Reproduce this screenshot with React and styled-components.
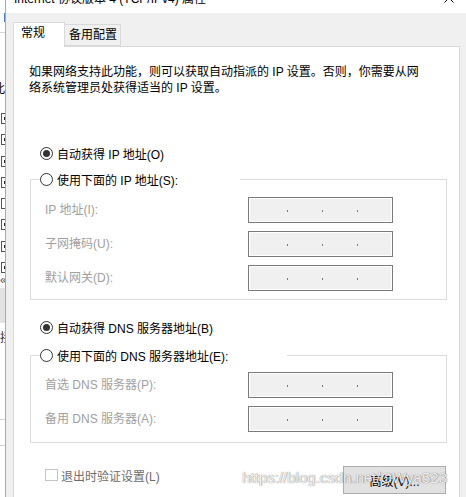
import React from "react";
import styled, { createGlobalStyle } from "styled-components";

const GlobalStyle = createGlobalStyle`
  html, body {
    margin: 0;
    padding: 0;
    background: #fff;
  }
  body {
    font-family: "Liberation Sans", "Noto Sans CJK SC", sans-serif;
    font-size: 12px;
    color: #000;
  }
  * {
    box-sizing: border-box;
  }
`;

const Screen = styled.div`
  position: relative;
  display: flex;
  width: 466px;
  height: 497px;
  overflow: hidden;
`;

/* sliver of the window lying behind the dialog */
const BackWindow = styled.div`
  flex: none;
  width: 5px;
  display: flex;
  flex-direction: column;
  overflow: hidden;
  background: #fff;
`;

const BackMark = styled.div`
  flex: none;
  margin-top: ${(p) => p.$top}px;
  margin-left: ${(p) => p.$left || 0}px;
  width: ${(p) => p.$w || 5}px;
  height: ${(p) => p.$h}px;
  background: ${(p) => p.$bg};
`;

const BackGlyph = styled.div`
  flex: none;
  margin-top: ${(p) => p.$top}px;
  margin-left: ${(p) => p.$shift}px;
  height: 16px;
  line-height: 16px;
  white-space: nowrap;
  font-size: 12px;
  color: ${(p) => p.$color || "#000"};
`;

const BackChecks = styled.div`
  flex: none;
  margin-top: ${(p) => p.$top}px;
  display: flex;
  flex-direction: column;
  gap: 10.3px;
`;

const BackCheck = styled.div`
  width: 11px;
  height: 11px;
  margin-left: 1px;
  border: 1px solid #555;
  background: #fff;
  position: relative;

  &::after {
    content: "";
    display: ${(p) => (p.$on ? "block" : "none")};
    position: absolute;
    left: 2px;
    top: 3px;
    width: 2px;
    height: 3px;
    background: #222;
  }
`;

const Dialog = styled.div`
  flex: 1;
  display: flex;
  flex-direction: column;
  border-left: 1px solid #a9a9a9;
  background: #f0f0f0;
`;

const TitleBar = styled.div`
  flex: none;
  height: 13px;
  display: flex;
  justify-content: space-between;
  padding: 0 12px 0 8px;
  overflow: hidden;
  background: #fff;
`;

const TitleText = styled.div`
  margin-top: -9px;
  line-height: 16px;
  white-space: nowrap;
  color: #000;
`;

const CloseIcon = styled.svg`
  margin-top: -7px;
  flex: none;
`;

const Body = styled.div`
  flex: 1;
  display: flex;
  flex-direction: column;
  padding: 9px 6px 0 7px;
`;

const TabStrip = styled.div`
  flex: none;
  display: flex;
  align-items: flex-end;
  height: 24px;
`;

const Tab = styled.div`
  position: relative;
  z-index: ${(p) => (p.$active ? 1 : 0)};
  width: ${(p) => (p.$active ? 52 : 57)}px;
  height: ${(p) => (p.$active ? 25 : 22)}px;
  margin-bottom: ${(p) => (p.$active ? -1 : 0)}px;
  margin-left: ${(p) => (p.$active ? 0 : -1)}px;
  padding-left: ${(p) => (p.$active ? 7 : 4)}px;
  border: 1px solid #d9d9d9;
  border-bottom: ${(p) => (p.$active ? "none" : "1px solid #d9d9d9")};
  background: ${(p) => (p.$active ? "#fff" : "#f0f0f0")};
  line-height: ${(p) => (p.$active ? 21 : 20)}px;
  white-space: nowrap;
`;

const Panel = styled.div`
  flex: 1;
  display: flex;
  flex-direction: column;
  padding-top: 17px;
  border: 1px solid #d9d9d9;
  border-bottom: none;
  background: #fff;
`;

const Description = styled.p`
  margin: 0 0 0 15px;
  line-height: 16px;
  white-space: nowrap;
`;

const RadioRow = styled.div`
  display: flex;
  align-items: center;
  gap: 4px;
  height: 16px;
  margin-top: ${(p) => p.$top || 0}px;
  margin-left: ${(p) => (p.$inset ? 26 : 0)}px;
  white-space: nowrap;
`;

const RadioDot = styled.span`
  flex: none;
  width: 13px;
  height: 13px;
  border: 1px solid #333;
  border-radius: 50%;
  display: flex;
  align-items: center;
  justify-content: center;
  background: #fff;

  &::after {
    content: "";
    display: ${(p) => (p.$checked ? "block" : "none")};
    width: 7px;
    height: 7px;
    border-radius: 50%;
    background: #333;
  }
`;

const Group = styled.fieldset`
  width: 417px;
  min-width: 0;
  margin: ${(p) => p.$top}px 0 0 16px;
  padding: ${(p) => p.$padTop}px 0 ${(p) => p.$padBottom}px 0;
  border: 1px solid #dcdcdc;
  display: flex;
  flex-direction: column;
  gap: 8px;
`;

const GroupLegend = styled.legend`
  width: ${(p) => p.$width}px;
  margin-left: 9px;
  padding: 0;
  height: 16px;
`;

const FieldRow = styled.div`
  display: grid;
  grid-template-columns: 203px 145px;
  height: 26px;
  margin-left: 14px;
`;

const FieldLabel = styled.span`
  line-height: 26px;
  color: #a0a0a0;
  white-space: nowrap;
`;

const IpBox = styled.div`
  display: flex;
  align-items: center;
  width: 145px;
  height: 26px;
  padding-left: 4px;
  border: 1px solid #7a7a7a;
  box-shadow: inset 0 0 0 1px #fff;
  background: #f0f0f0;
`;

const Octet = styled.span`
  flex: ${(p) => (p.$last ? "1" : "none")};
  width: 34px;
  height: 100%;
`;

const IpDot = styled.span`
  flex: none;
  width: 1px;
  height: 2px;
  margin-top: 2px;
  background: #777;
`;

const BottomRow = styled.div`
  display: flex;
  justify-content: space-between;
  align-items: flex-start;
  margin: 23px 13px 0 31px;
`;

const CheckRow = styled.label`
  display: flex;
  align-items: center;
  gap: 3px;
  height: 16px;
  margin-top: 1px;
  color: #6d6d6d;
  white-space: nowrap;
`;

const CheckBox = styled.span`
  flex: none;
  width: 13px;
  height: 12px;
  border: 1px solid #c4c4c4;
  background: #fff;
`;

const Button = styled.button`
  width: 103px;
  height: 28px;
  padding: 0;
  border: 1px solid #adadad;
  background: #e1e1e1;
  font: inherit;
  color: #000;
`;

const Watermark = styled.div`
  position: absolute;
  left: 242px;
  top: 469px;
  font-family: "Liberation Sans", sans-serif;
  font-size: 15px;
  line-height: 18px;
  white-space: nowrap;
  color: rgba(255, 255, 255, 0.9);
  text-shadow: 0 0 1px rgba(0, 0, 0, 0.5), 1px 0 1px rgba(0, 0, 0, 0.2);
  pointer-events: none;
`;

const IpField = () => (
  <IpBox>
    <Octet />
    <IpDot />
    <Octet />
    <IpDot />
    <Octet />
    <IpDot />
    <Octet $last />
  </IpBox>
);

const Radio = ({ checked, label, top, inset }) => (
  <RadioRow $top={top} $inset={inset}>
    <RadioDot $checked={checked} />
    {label}
  </RadioRow>
);

const ipRows = ["IP 地址(I):", "子网掩码(U):", "默认网关(D):"];
const dnsRows = ["首选 DNS 服务器(P):", "备用 DNS 服务器(A):"];
const backChecks = [true, true, true, true, false, true, true, true];

const App = () => {
  return (
    <>
      <GlobalStyle />
      <Screen>
        <BackWindow>
          <BackMark $top={13} $left={4} $w={1} $h={9} $bg="#4a7fc1" />
          <BackMark $top={10} $h={1} $bg="#d6d6d6" />
          <BackGlyph $top={48} $shift={-7}>
            此
          </BackGlyph>
          <BackChecks $top={16}>
            {backChecks.map((on, i) => (
              <BackCheck key={i} $on={on} />
            ))}
          </BackChecks>
          <BackGlyph $top={-1} $shift={0} $color="#555">
            «
          </BackGlyph>
          <BackMark $top={0} $h={35} $bg="#e3e3e3" />
          <BackGlyph $top={7} $shift={0} $color="#333">
            接
          </BackGlyph>
          <BackMark $top={73} $h={1} $bg="#d6d6d6" />
          <BackMark $top={25} $h={1} $bg="#d6d6d6" />
        </BackWindow>

        <Dialog>
          <TitleBar>
            <TitleText>Internet 协议版本 4 (TCP/IPv4) 属性</TitleText>
            <CloseIcon width="10" height="10" viewBox="0 0 10 10">
              <path d="M0.5 0.5 L9.5 9.5 M9.5 0.5 L0.5 9.5" stroke="#000" strokeWidth="1" />
            </CloseIcon>
          </TitleBar>

          <Body>
            <TabStrip>
              <Tab $active>常规</Tab>
              <Tab>备用配置</Tab>
            </TabStrip>

            <Panel>
              <Description>
                如果网络支持此功能，则可以获取自动指派的 IP 设置。否则，你需要从网
                <br />
                络系统管理员处获得适当的 IP 设置。
              </Description>

              <Radio checked inset top={49} label="自动获得 IP 地址(O)" />

              <Group $top={10} $padTop={10} $padBottom={8}>
                <GroupLegend $width={200}>
                  <Radio label="使用下面的 IP 地址(S):" />
                </GroupLegend>
                {ipRows.map((label) => (
                  <FieldRow key={label}>
                    <FieldLabel>{label}</FieldLabel>
                    <IpField />
                  </FieldRow>
                ))}
              </Group>

              <Radio checked inset top={19} label="自动获得 DNS 服务器地址(B)" />

              <Group $top={12} $padTop={9} $padBottom={10}>
                <GroupLegend $width={247}>
                  <Radio label="使用下面的 DNS 服务器地址(E):" />
                </GroupLegend>
                {dnsRows.map((label) => (
                  <FieldRow key={label}>
                    <FieldLabel>{label}</FieldLabel>
                    <IpField />
                  </FieldRow>
                ))}
              </Group>

              <BottomRow>
                <CheckRow>
                  <CheckBox />
                  退出时验证设置(L)
                </CheckRow>
                <Button type="button">高级(V)...</Button>
              </BottomRow>
            </Panel>
          </Body>
        </Dialog>

        <Watermark>https://blog.csdn.net/OWya523</Watermark>
      </Screen>
    </>
  );
};

export default App;
